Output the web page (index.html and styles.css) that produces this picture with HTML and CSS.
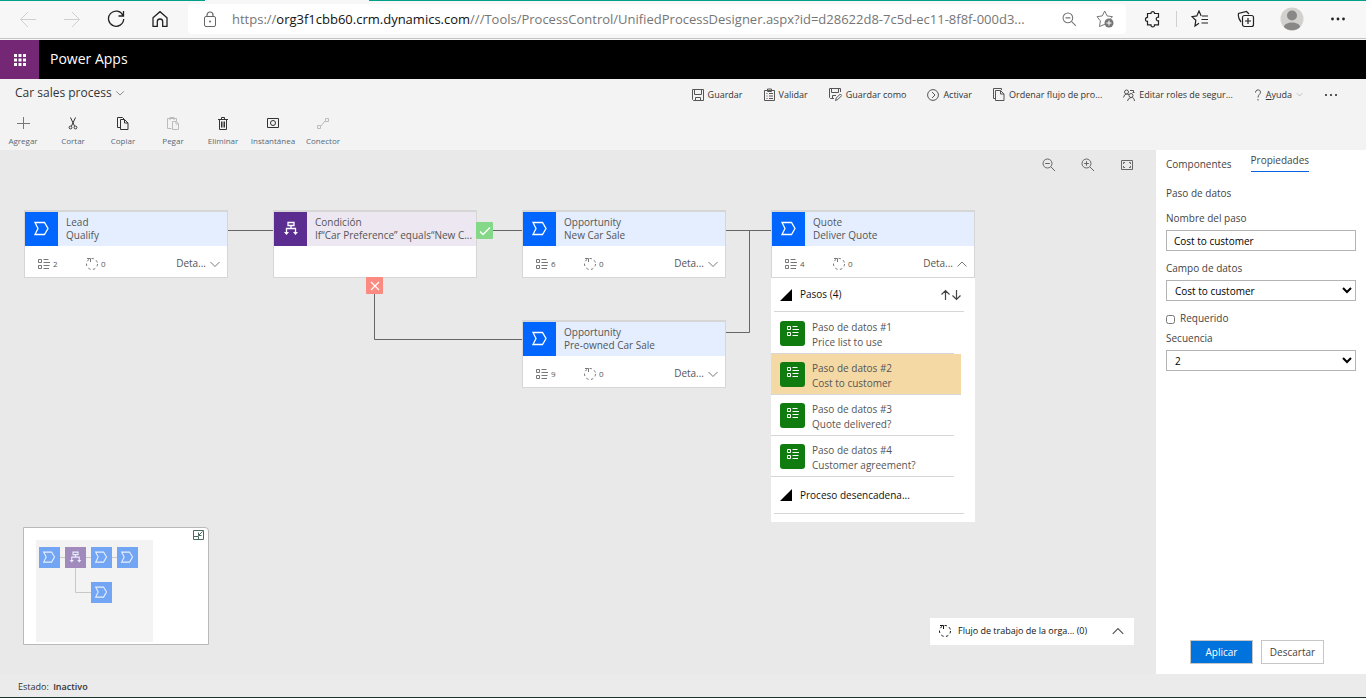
FILE: index.html
```html
<!DOCTYPE html>
<html lang="es">
<head>
<meta charset="utf-8">
<title>Car sales process - Power Apps</title>
<link rel="stylesheet" href="styles.css">
</head>
<body>
<svg class="sprite" aria-hidden="true">
  <symbol id="stage" viewBox="0 0 18 18"><path d="M2 2.500h9.500l3.500 6-3.500 6H2l3-6z" fill="none" stroke="currentColor" stroke-width="1.300"/></symbol>
  <symbol id="branch" viewBox="0 0 18 18"><path d="M6 2.500h6v3H6zM9 5.500V8.500M4.500 13V8.500h9V13" fill="none" stroke="currentColor" stroke-width="1.300"/><path d="M2 12h5L4.500 15zM11 12h5l-2.500 3z" fill="currentColor"/></symbol>
  <symbol id="list" viewBox="0 0 14 12"><path d="M1.500 1.500h3v3h-3zM1.500 7.500h3v3h-3zM6.500 1.500h5M6.500 4.500H13M6.500 7.500h6M6.500 10.500H12" fill="none" stroke="currentColor"/></symbol>
  <symbol id="ring" viewBox="0 0 14 14"><circle cx="7" cy="7" r="5.500" fill="none" stroke="currentColor" stroke-dasharray="2.500 2.440"/><path d="M2 1.500h3.500V5" fill="none" stroke="currentColor"/></symbol>
  <symbol id="down" viewBox="0 0 12 12"><path d="M1.500 4 6 8.500 10.500 4" fill="none" stroke="currentColor"/></symbol>
  <symbol id="up" viewBox="0 0 12 12"><path d="M1.500 8.500 6 4l4.500 4.500" fill="none" stroke="currentColor"/></symbol>
  <symbol id="corner" viewBox="0 0 12 12"><path d="M12 0v12H0z" fill="#000"/></symbol>
  <symbol id="minus-lens" viewBox="0 0 14 14"><path d="M9 9l4 4M3.200 5.500h4.600" fill="none" stroke="currentColor"/><circle cx="5.500" cy="5.500" r="4.500" fill="none" stroke="currentColor"/></symbol>
</svg>

<header class="browser">
  <nav class="nav">
    <button class="tool off" aria-label="Atrás"><svg width="18" height="18"><path d="M17 9.500H2M9 2 1.500 9.500 9 17" fill="none" stroke="currentColor"/></svg></button>
    <button class="tool off" aria-label="Adelante"><svg width="18" height="18"><path d="M1 9.500h15M9 2l7.500 7.500L9 17" fill="none" stroke="currentColor"/></svg></button>
    <button class="tool" aria-label="Actualizar"><svg width="18" height="18"><path d="M16 5.500A7.600 7.600 0 1 0 16.700 9M16.500 1v5h-5" fill="none" stroke="currentColor" stroke-width="1.300"/></svg></button>
    <button class="tool" aria-label="Inicio"><svg width="18" height="18"><path d="M2 7.800 9 1.700l7 6.100v8.500h-4.300v-4.600a2.700 2.700 0 0 0-5.400 0v4.600H2z" fill="none" stroke="currentColor" stroke-width="1.300"/></svg></button>
  </nav>
  <div class="address">
    <svg class="lock" width="14" height="17"><rect x="1.500" y="5.500" width="11" height="10" rx="1.500" fill="none" stroke="currentColor"/><path d="M4 5.500V4a3 3 0 0 1 6 0v1.500" fill="none" stroke="currentColor" stroke-width="1.200"/><circle cx="7" cy="10.500" r="1" fill="currentColor"/></svg>
    <p class="url">https://<strong>org3f1cbb60.crm.dynamics.com</strong>///Tools/ProcessControl/UnifiedProcessDesigner.aspx?id=d28622d8-7c5d-ec11-8f8f-000d3...</p>
    <button class="tool small grey" aria-label="Zoom"><svg width="15" height="15"><use href="#minus-lens"/></svg></button>
    <button class="tool small grey" aria-label="Agregar a favoritos"><svg width="18" height="18"><path d="M9 14.200 3.500 16.500l.9-5.600L1 6.700l5.300-.8L8.700 1l2.400 4.900 5.400.8-2 2.100" fill="none" stroke="currentColor"/><circle cx="13" cy="13" r="4.500" fill="currentColor"/><path d="M13 10.500v5M10.500 13h5" stroke="#fff"/></svg></button>
  </div>
  <div class="extras">
    <button class="tool" aria-label="Extensiones"><svg width="18" height="18"><path d="M3.500 3.500H7C6.500 1 11 1 10.500 3.500h4v3.700c-3-.6-3 4.200 0 3.600v4h-4C11 17.500 6.500 17.500 7 14.800H3.500v-3.500C.8 12 .8 7 3.500 7.500z" fill="none" stroke="currentColor" stroke-width="1.200"/></svg></button>
    <span class="divider"></span>
    <button class="tool" aria-label="Favoritos"><svg width="18" height="18"><path d="M8 13.200 4 16l.8-5.800L1 6.700l4.800-.8L8 1l2.200 4.900M10.500 9.500H17M10.500 13H17M11 6h6" fill="none" stroke="currentColor" stroke-width="1.200"/></svg></button>
    <button class="tool" aria-label="Colecciones"><svg width="18" height="18"><path d="M4 12C1.500 9 1 6 1.500 3.500L9.500 1.500 12 4" fill="none" stroke="currentColor" stroke-width="1.200"/><rect x="5.500" y="5.500" width="11" height="11" rx="2" fill="none" stroke="currentColor" stroke-width="1.200"/><path d="M11 8v6M8 11h6" stroke="currentColor" stroke-width="1.200"/></svg></button>
    <button class="tool" aria-label="Perfil"><svg width="24" height="24"><circle cx="12" cy="12" r="11.500" fill="#d3d1ce"/><circle cx="12" cy="8.500" r="5" fill="#8a8886"/><path d="M4 20c0-6 16-6 16 0a11.500 11.500 0 0 1-16 0z" fill="#8a8886"/></svg></button>
    <button class="tool" aria-label="Más"><svg width="16" height="4"><g fill="currentColor"><circle cx="2.500" cy="2" r="1.400"/><circle cx="8" cy="2" r="1.400"/><circle cx="13.500" cy="2" r="1.400"/></g></svg></button>
  </div>
</header>

<div class="suite">
  <button class="waffle" aria-label="Aplicaciones"><svg width="12" height="12" fill="#fff"><path d="M0 0h3v3H0zM4.500 0h3v3h-3zM9 0h3v3H9zM0 4.500h3v3H0zM4.500 4.500h3v3h-3zM9 4.500h3v3H9zM0 9h3v3H0zM4.500 9h3v3h-3zM9 9h3v3H9z"/></svg></button>
  <span class="brand">Power Apps</span>
</div>

<section class="commands">
  <div class="row">
    <button class="title">Car sales process <svg width="10" height="10" viewBox="0 0 12 12"><use href="#down"/></svg></button>
    <div class="actions">
      <button><svg width="12" height="12"><path d="M.5.500h11v11h-10l-1-1zM2.500.500v5h7v-5M3.500 11.500v-3h5v3" fill="none" stroke="currentColor"/></svg>Guardar</button>
      <button><svg width="11" height="13"><path d="M.5 2.500h10v10H.5zM3.500 1h4v2.500h-4zM2.500 5.500h1M5 5.500h4M2.500 8h1M5 8h4M2.500 10.500h1M5 10.500h4" fill="none" stroke="currentColor"/></svg>Validar</button>
      <button><svg width="13" height="13"><path d="M11.500 4V.500H.5v9l1 1H5M2.500.500v4h7v-4M3.500 10.500v-3H7M6.500 12.500l.8-2.500 4-4 1.500 1.500-4 4z" fill="none" stroke="currentColor"/></svg>Guardar como</button>
      <button><svg width="12" height="12"><circle cx="6" cy="6" r="5.400" fill="none" stroke="currentColor"/><path d="m5 3 3 3-3 3" fill="none" stroke="currentColor"/></svg>Activar</button>
      <button><svg width="12" height="13"><path d="M2.500 2.500h5l3.500 3.500v6.500H2.500zM7.500 2.500V6H11M2 10.500H.5V.500h8V2" fill="none" stroke="currentColor"/></svg>Ordenar flujo de pro...</button>
      <button><svg width="12" height="12"><circle cx="3.500" cy="3" r="2" fill="none" stroke="currentColor"/><circle cx="8" cy="6.500" r="2" fill="none" stroke="currentColor"/><path d="M.5 8.500Q1 5.500 3.500 5t2 1M4.500 12Q5 9 8 8.500t3.500 3.500M7 1.500h3.500V4M9.500 3l1 1 1-1" fill="none" stroke="currentColor"/></svg>Editar roles de segur...</button>
      <button><svg width="8" height="12"><path d="M1.500 3.500C1.500 0 6.500 0 6.500 3.200 6.500 5.500 4 5.500 4 8.500M4 10v1.500" fill="none" stroke="currentColor"/></svg><span><u>A</u>yuda</span><svg class="faint" width="7" height="7" viewBox="0 0 12 12"><use href="#down"/></svg></button>
      <button aria-label="Más comandos"><svg width="14" height="4"><path d="M1 1h2v2H1zM6 1h2v2H6zM11 1h2v2h-2z" fill="currentColor"/></svg></button>
    </div>
  </div>
  <div class="tools">
    <button><svg width="14" height="14"><path d="M7.500 1v12M1 7.500h13" fill="none" stroke="#777"/></svg>Agregar</button>
    <button><svg width="14" height="14"><path d="M4.500 1.500 8.500 10M9.500 1.500 5.500 10" fill="none" stroke="currentColor"/><circle cx="4.500" cy="11.500" r="1.400" fill="none" stroke="currentColor"/><circle cx="9.500" cy="11.500" r="1.400" fill="none" stroke="currentColor"/></svg>Cortar</button>
    <button><svg width="14" height="14"><path d="M4.500 3.500h4l3.500 3.500v6.500H4.500zM8.500 3.500V7H12M4 11.500H1.500v-10h5l1.500 1.500" fill="none" stroke="currentColor"/></svg>Copiar</button>
    <button class="off" disabled><svg width="14" height="14"><path d="M5.500 12.500h-4v-10h9V5M4 4V1.500h4V4M6.500 5.500h4l2 2v6h-6zM10 5.500V8h2.500" fill="none" stroke="currentColor"/></svg>Pegar</button>
    <button><svg width="14" height="14"><path d="M2 3.500h10M3.500 3.500v10h7v-10M5.500 3V1.500h3V3M5.500 5.500v6M7 5.500v6M8.500 5.500v6" fill="none" stroke="currentColor"/></svg>Eliminar</button>
    <button><svg width="14" height="14"><path d="M1.500 2.500h11v9h-11z" fill="none" stroke="currentColor"/><circle cx="7" cy="7" r="2.500" fill="none" stroke="currentColor"/></svg>Instantánea</button>
    <button class="off" disabled><svg width="14" height="14"><path d="M1.500 9.500h3v3h-3zM9.500 2.500h3v3h-3zM4.500 10.500 9.500 4.500" fill="none" stroke="currentColor"/></svg>Conector</button>
  </div>
</section>

<main class="work">
  <section class="canvas" aria-label="Diagrama del proceso">
    <div class="zoomers">
      <button aria-label="Alejar"><svg width="14" height="14"><use href="#minus-lens"/></svg></button>
      <button aria-label="Acercar"><svg width="14" height="14"><use href="#minus-lens"/><path d="M5.500 3.200v4.600" stroke="currentColor"/></svg></button>
      <button aria-label="Ajustar"><svg width="14" height="12"><path d="M1.500 1.500h11v9h-11zM3.500 5V3.500H5M9 3.500h1.500V5M10.500 7v1.500H9M5 8.500H3.500V7" fill="none" stroke="currentColor"/></svg></button>
    </div>

    <svg class="wires" width="980" height="240"><path d="M227 80.500h46M476 80.500h46M725 80.500h46M374.500 140v49.500H523M725 182.500h24.500v-102" fill="none" stroke="#666"/></svg>

    <article class="node lead">
      <div class="head"><span class="badge"><svg width="18" height="18"><use href="#stage"/></svg></span><p>Lead<br>Qualify</p></div>
      <div class="foot"><svg width="14" height="12"><use href="#list"/></svg><small>2</small><svg class="ring" width="14" height="14"><use href="#ring"/></svg><small>0</small><button>Deta...<svg width="12" height="12"><use href="#down"/></svg></button></div>
    </article>
    <article class="node condition">
      <div class="head"><span class="badge"><svg width="18" height="18"><use href="#branch"/></svg></span><p>Condición<br>If“Car Preference” equals“New C...</p></div>
      <div class="foot"></div>
    </article>
    <article class="node newcar">
      <div class="head"><span class="badge"><svg width="18" height="18"><use href="#stage"/></svg></span><p>Opportunity<br>New Car Sale</p></div>
      <div class="foot"><svg width="14" height="12"><use href="#list"/></svg><small>6</small><svg class="ring" width="14" height="14"><use href="#ring"/></svg><small>0</small><button>Deta...<svg width="12" height="12"><use href="#down"/></svg></button></div>
    </article>
    <article class="node preowned">
      <div class="head"><span class="badge"><svg width="18" height="18"><use href="#stage"/></svg></span><p>Opportunity<br>Pre-owned Car Sale</p></div>
      <div class="foot"><svg width="14" height="12"><use href="#list"/></svg><small>9</small><svg class="ring" width="14" height="14"><use href="#ring"/></svg><small>0</small><button>Deta...<svg width="12" height="12"><use href="#down"/></svg></button></div>
    </article>
    <article class="node quote">
      <div class="head"><span class="badge"><svg width="18" height="18"><use href="#stage"/></svg></span><p>Quote<br>Deliver Quote</p></div>
      <div class="foot"><svg width="14" height="12"><use href="#list"/></svg><small>4</small><svg class="ring" width="14" height="14"><use href="#ring"/></svg><small>0</small><button>Deta...<svg width="12" height="12"><use href="#up"/></svg></button></div>
      <div class="details">
        <div class="group"><svg width="12" height="12"><use href="#corner"/></svg>Pasos (4)
          <svg class="sort" width="22" height="12"><path d="M5.500 11V1.500M1.500 5.500l4-4 4 4M16.500 1v9.500M12.500 6.500l4 4 4-4" fill="none" stroke="#444" stroke-width="1.200"/></svg></div>
        <ul>
          <li><span class="step"><svg width="14" height="12"><use href="#list"/></svg></span><p>Paso de datos #1<br>Price list to use</p></li>
          <li class="active"><span class="step"><svg width="14" height="12"><use href="#list"/></svg></span><p>Paso de datos #2<br>Cost to customer</p></li>
          <li><span class="step"><svg width="14" height="12"><use href="#list"/></svg></span><p>Paso de datos #3<br>Quote delivered?</p></li>
          <li><span class="step"><svg width="14" height="12"><use href="#list"/></svg></span><p>Paso de datos #4<br>Customer agreement?</p></li>
        </ul>
        <div class="group last"><svg width="12" height="12"><use href="#corner"/></svg>Proceso desencadena...</div>
      </div>
    </article>
    <span class="mark yes"><svg width="12" height="12"><path d="m1 6.500 3 3 7-7" fill="none" stroke="#fff" stroke-width="1.300"/></svg></span>
    <span class="mark no"><svg width="12" height="12"><path d="m2 2 8 8M10 2l-8 8" fill="none" stroke="#fff" stroke-width="1.200"/></svg></span>

    <div class="minimap">
      <svg width="184" height="116">
        <path d="M12 12h117v102H12z" fill="#f3f3f3"/>
        <path d="M36 29.500h58M51.500 40v24.500H67" fill="none" stroke="#c8c8c8"/>
        <g fill="#73a5f5"><path d="M15 19h21v21H15zM67 19h21v21H67zM93 19h21v21H93zM67 54h21v21H67z"/><path d="M41 19h21v21H41z" fill="#a18bbd"/></g>
        <g color="#e8effc"><use href="#stage" x="18" y="22" width="15" height="15"/><use href="#branch" x="44" y="22" width="15" height="15"/><use href="#stage" x="70" y="22" width="15" height="15"/><use href="#stage" x="96" y="22" width="15" height="15"/><use href="#stage" x="70" y="57" width="15" height="15"/></g>
        <path d="M169.500 2.500h10v9h-10zM169.500 8.500h5v3M178.500 3.500l-4 4M174.500 4.500v3h3" fill="none" stroke="#4a6a60"/>
      </svg>
    </div>

    <button class="workflow"><svg width="14" height="14"><use href="#ring"/></svg>Flujo de trabajo de la orga... (0)<svg class="end" width="14" height="14" viewBox="0 0 12 12"><use href="#up"/></svg></button>
  </section>

  <aside class="side">
    <div class="tabs"><button>Componentes</button><button class="current">Propiedades</button></div>
    <form class="form">
      <h2>Paso de datos</h2>
      <label for="step">Nombre del paso</label>
      <input id="step" type="text" value="Cost to customer">
      <label for="field">Campo de datos</label>
      <select id="field"><option>Cost to customer</option></select>
      <label class="check"><input type="checkbox">Requerido</label>
      <label for="order">Secuencia</label>
      <select id="order"><option>2</option></select>
    </form>
    <div class="buttons"><button class="primary">Aplicar</button><button>Descartar</button></div>
  </aside>
</main>

<footer class="status">Estado: <b>Inactivo</b></footer>
</body>
</html>
```

FILE: styles.css
```css
* { box-sizing: border-box; }

body {
  margin: 0;
  min-height: 100vh;
  display: flex;
  flex-direction: column;
  background: #eaeaea;
  color: #333;
  font: 10px/13px "Open Sans", "Noto Sans", sans-serif;
}

p, h2, ul { margin: 0; padding: 0; }
svg { display: block; flex: none; }
.sprite { position: absolute; width: 0; height: 0; }

button {
  padding: 0;
  border: 0;
  background: none;
  color: inherit;
  font: inherit;
  white-space: nowrap;
}

/* Browser bar */
.browser {
  display: flex;
  align-items: center;
  height: 40px;
  padding: 0 5px 2px 6px;
  background: #f7f7f7;
  border-bottom: 1px solid #b5b5b5;
  border-top: 1px solid;
  border-image: linear-gradient(to right, #009f8a 15%, #f7f7f7 15%, #f7f7f7 27%, #009f8a 27%) 1 0 0 0;
  box-shadow: inset 0 -1px #c4c4c4;
}
.nav, .extras { display: flex; align-items: center; }
.tool {
  display: grid;
  place-items: center;
  width: 44px;
  height: 30px;
  color: #222;
}
.extras .tool { width: 46px; }
.tool.small { width: 36px; }
.tool.grey { color: #767676; }
.tool.off { color: #cfcfcf; }
.divider { width: 1px; height: 16px; background: #d0d0d0; }
.address {
  flex: 1;
  display: flex;
  align-items: center;
  height: 30px;
  margin: 0 4px 0 6px;
  padding: 0 3px 0 15px;
  background: #fff;
  border-radius: 4px;
  min-width: 0;
}
.lock { color: #666; }
.url {
  flex: 1;
  margin-left: 15px;
  color: #767676;
  font-size: 13px;
  line-height: 20px;
  white-space: nowrap;
}
.url strong { font-weight: 400; color: #111; }

/* Suite header */
.suite {
  display: flex;
  align-items: center;
  gap: 11px;
  height: 39px;
  background: #000;
  color: #fff;
}
.waffle {
  display: grid;
  place-items: center;
  width: 39px;
  height: 39px;
  background: #742774;
}
.brand { padding-bottom: 2px; font-size: 14px; line-height: 20px; }

/* Command area */
.commands { height: 71px; background: #f3f3f3; }
.row {
  display: flex;
  justify-content: space-between;
  padding: 6px 28px 0 15px;
}
.title { display: flex; align-items: center; gap: 3px; font-size: 12px; line-height: 16px; }
.title svg { color: #777; }
.actions { display: flex; gap: 21px; padding-top: 3px; font-size: 9px; }
.actions button { display: flex; align-items: center; gap: 4px; }
.actions svg { color: #555; }
.actions .faint { color: #999; }
.tools { display: flex; gap: 4px; padding-top: 15px; }
.tools button {
  display: flex;
  flex-direction: column;
  align-items: center;
  gap: 5px;
  width: 46px;
  color: #56697a;
  font-size: 8px;
  line-height: 12px;
}
.tools svg { color: #333; }
.tools .off svg { color: #bbb; }

/* Workspace */
.work { flex: 1; display: flex; min-height: 524px; }
.canvas { position: relative; flex: 1; background: #e9e9e9; }
.zoomers { display: flex; justify-content: flex-end; gap: 25px; padding: 8px 22px; color: #666; }
.zoomers button { display: grid; place-items: center; }
.wires { position: absolute; left: 0; top: 0; }

.node {
  position: absolute;
  width: 204px;
  background: #fff;
  border: 1px solid #d6d6d6;
  border-top-width: 2px;
  color: #555;
}
.lead { left: 24px; top: 60px; }
.condition { left: 273px; top: 60px; }
.newcar { left: 522px; top: 60px; }
.preowned { left: 522px; top: 170px; }
.quote { left: 771px; top: 60px; }

.head { display: flex; align-items: center; gap: 8px; height: 34px; background: #e4eeff; white-space: nowrap; }
.badge { display: grid; place-items: center; width: 33px; height: 34px; background: #0066ff; color: #fff; }
.condition .head { background: #ece7f1; }
.condition .badge { background: #5c2d91; }
.foot { display: flex; align-items: center; height: 31px; padding: 4px 6px 0 12px; }
.foot svg { color: #777; }
.foot small { width: 8px; margin-left: 2px; font-size: 8px; }
.ring { margin-left: 24px; }
.foot button { display: flex; align-items: center; gap: 3px; margin-left: auto; }

.details { position: absolute; left: -1px; top: 66px; width: 204px; height: 244px; background: #fff; }
.group {
  display: flex;
  align-items: center;
  gap: 8px;
  height: 34px;
  margin: 0 11px 0 3px;
  padding-left: 6px;
  border-bottom: 1px solid #d6d6d6;
  color: #111;
}
.group.last { height: 37px; }
.sort { margin-left: auto; margin-right: 2px; }
.details ul { list-style: none; padding-top: 1px; }
.details li {
  display: flex;
  align-items: center;
  gap: 7px;
  height: 41px;
  margin-right: 21px;
  padding-left: 9px;
  border-bottom: 1px solid #d6d6d6;
  line-height: 15px;
}
.details li p { padding-top: 4px; }
.details li.active { margin-right: 14px; background: #f5d9a5; }
.step { display: grid; place-items: center; width: 25px; height: 25px; padding-bottom: 4px; border-radius: 3px; background: #107c10; color: #fff; }

.mark { position: absolute; display: grid; place-items: center; width: 17px; height: 17px; border-radius: 1px; }
.yes { left: 476px; top: 72px; background: #85d888; }
.no { left: 366px; top: 127px; background: #fb8a80; }

.minimap { position: absolute; left: 23px; bottom: 29px; background: #fff; border: 1px solid #b9b9b9; border-top-right-radius: 4px; }

.workflow {
  position: absolute;
  right: 22px;
  bottom: 29px;
  display: flex;
  align-items: center;
  gap: 6px;
  width: 204px;
  height: 27px;
  padding: 0 9px 2px 8px;
  background: #fff;
  color: #111;
  font-size: 9px;
}
.end { margin-left: auto; color: #555; }

/* Properties panel */
.side {
  display: flex;
  flex-direction: column;
  justify-content: space-between;
  width: 210px;
  padding: 2px 10px 10px;
  background: #fff;
  color: #444;
  font-size: 10px;
  line-height: 16px;
}
.tabs { display: flex; align-items: flex-end; gap: 19px; }
.tabs .current { padding-bottom: 3px; border-bottom: 1px solid #0a62e8; }
.form { display: flex; flex-direction: column; margin: 13px 0 auto; }
.form h2 { font-size: 10px; font-weight: 400; line-height: 16px; margin-bottom: 9px; }
.form label { line-height: 16px; margin-bottom: 4px; }
.form input[type="text"], .form select {
  width: 100%;
  height: 21px;
  margin: 0 0 9px;
  padding: 0 7px;
  border: 1px solid #b3b3b3;
  border-radius: 0;
  background: #fff;
  color: #000;
  font: inherit;
}
.form select { padding: 0 4px; }
.check { display: flex; align-items: center; gap: 5px; }
.check input { width: 9px; height: 9px; margin: 2px 0 0; }
.buttons { display: flex; gap: 8px; padding-left: 24px; }
.buttons button { width: 63px; height: 24px; border: 1px solid #c6c6c6; }
.buttons .primary { background: #0073dc; color: #fff; }

.status {
  height: 24px;
  padding: 6px 18px;
  background: #ebebeb;
  border-bottom: 1px solid #1c3330;
  font-size: 9px;
}
.status b { margin-left: 2px; font-weight: 600; }
```
